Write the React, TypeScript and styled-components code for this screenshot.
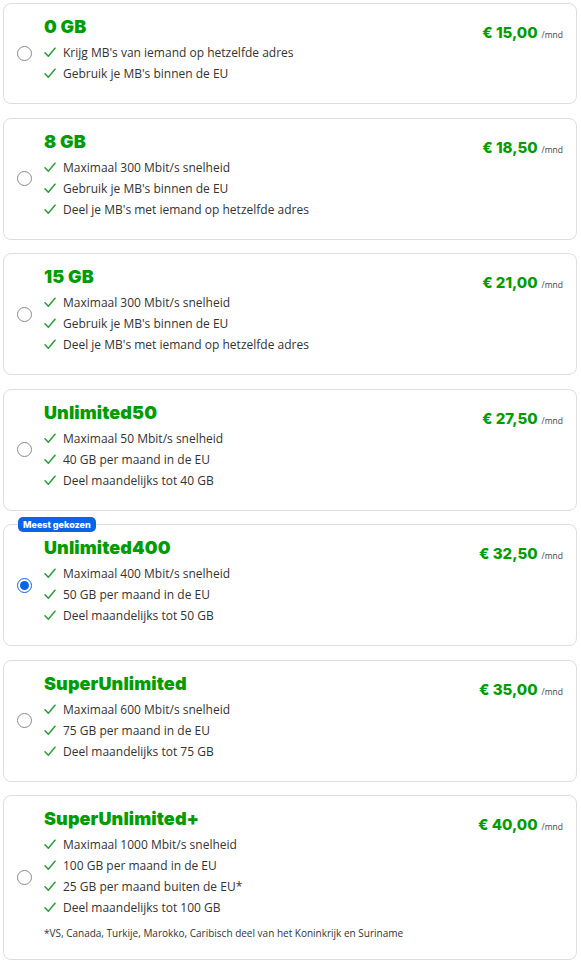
import { useState } from "react";
import styled, { createGlobalStyle } from "styled-components";

const GlobalStyle = createGlobalStyle`
  body {
    margin: 0;
    background: #ffffff;
    font-family: "Open Sans", "Noto Sans", sans-serif;
    color: #333;
  }
`;

interface IPlan {
  id: string;
  title: string;
  price: string;
  features: string[];
  badge?: string;
  note?: string;
}

const plans: IPlan[] = [
  {
    id: "0gb",
    title: "0 GB",
    price: "€ 15,00",
    features: ["Krijg MB's van iemand op hetzelfde adres", "Gebruik je MB's binnen de EU"],
  },
  {
    id: "8gb",
    title: "8 GB",
    price: "€ 18,50",
    features: [
      "Maximaal 300 Mbit/s snelheid",
      "Gebruik je MB's binnen de EU",
      "Deel je MB's met iemand op hetzelfde adres",
    ],
  },
  {
    id: "15gb",
    title: "15 GB",
    price: "€ 21,00",
    features: [
      "Maximaal 300 Mbit/s snelheid",
      "Gebruik je MB's binnen de EU",
      "Deel je MB's met iemand op hetzelfde adres",
    ],
  },
  {
    id: "u50",
    title: "Unlimited50",
    price: "€ 27,50",
    features: ["Maximaal 50 Mbit/s snelheid", "40 GB per maand in de EU", "Deel maandelijks tot 40 GB"],
  },
  {
    id: "u400",
    title: "Unlimited400",
    price: "€ 32,50",
    badge: "Meest gekozen",
    features: ["Maximaal 400 Mbit/s snelheid", "50 GB per maand in de EU", "Deel maandelijks tot 50 GB"],
  },
  {
    id: "su",
    title: "SuperUnlimited",
    price: "€ 35,00",
    features: ["Maximaal 600 Mbit/s snelheid", "75 GB per maand in de EU", "Deel maandelijks tot 75 GB"],
  },
  {
    id: "suplus",
    title: "SuperUnlimited+",
    price: "€ 40,00",
    features: [
      "Maximaal 1000 Mbit/s snelheid",
      "100 GB per maand in de EU",
      "25 GB per maand buiten de EU*",
      "Deel maandelijks tot 100 GB",
    ],
    note: "*VS, Canada, Turkije, Marokko, Caribisch deel van het Koninkrijk en Suriname",
  },
];

const Check = () => (
  <svg width="12" height="11" viewBox="0 0 12 11" fill="none">
    <path d="M1 5.8 L4.3 9.3 L11 1.2" stroke="#2a9d3a" strokeWidth="1.5" strokeLinecap="round" strokeLinejoin="round" />
  </svg>
);

const App = () => {
  const [selected, setSelected] = useState("u400");

  return (
    <>
      <GlobalStyle />
      <List>
        {plans.map((plan) => (
          <Card key={plan.id} onClick={() => setSelected(plan.id)}>
            {plan.badge && <Badge>{plan.badge}</Badge>}
            <RadioCol>
              <Radio checked={selected === plan.id} />
            </RadioCol>
            <Body>
              <Title>{plan.title}</Title>
              <Features>
                {plan.features.map((f) => (
                  <Feature key={f}>
                    <Check />
                    <span>{f}</span>
                  </Feature>
                ))}
              </Features>
              {plan.note && <Note>{plan.note}</Note>}
            </Body>
            <Price>
              <Amount>{plan.price}</Amount>
              <Per>/mnd</Per>
            </Price>
          </Card>
        ))}
      </List>
    </>
  );
};

const List = styled.div`
  display: flex;
  flex-direction: column;
  gap: 13.5px;
  padding: 3px 4px 3px 3px;
`;

const Card = styled.div`
  position: relative;
  display: flex;
  align-items: stretch;
  border: 1px solid #dedede;
  border-radius: 8px;
  background: #fff;
  padding: 11px 13px 19px 0;
  cursor: pointer;
`;

const Badge = styled.div`
  position: absolute;
  top: -8px;
  left: 14px;
  background: #0b63e5;
  color: #fff;
  font-family: "Inter", sans-serif;
  font-weight: 800;
  font-size: 9px;
  line-height: 15px;
  padding: 0 5px;
  border-radius: 5px;
`;

const RadioCol = styled.div`
  width: 40px;
  display: flex;
  align-items: center;
  justify-content: center;
  flex-shrink: 0;
  margin-bottom: -8px;
`;

interface IRadio {
  checked: boolean;
}

const Radio = styled.span<IRadio>`
  box-sizing: border-box;
  width: 15px;
  height: 15px;
  border-radius: 50%;
  border: ${(p) => (p.checked ? "1.5px solid #0b63e5" : "1px solid #8a8a8a")};
  display: flex;
  align-items: center;
  justify-content: center;
  &::after {
    content: "";
    width: 9px;
    height: 9px;
    border-radius: 50%;
    background: #0b63e5;
    display: ${(p) => (p.checked ? "block" : "none")};
  }
`;

const Body = styled.div`
  flex: 1;
  display: flex;
  flex-direction: column;
`;

const Title = styled.div`
  font-family: "Inter", sans-serif;
  font-weight: 900;
  font-size: 18px;
  line-height: 24px;
  color: #009c00;
  letter-spacing: 0.1px;
  margin-bottom: 3px;
`;

const Features = styled.div`
  display: flex;
  flex-direction: column;
`;

const Feature = styled.div`
  display: flex;
  align-items: center;
  gap: 7px;
  font-size: 12px;
  line-height: 21px;
  color: #333;
`;

const Note = styled.div`
  font-size: 10px;
  color: #333;
  margin-top: 8px;
  line-height: 14px;
`;

const Price = styled.div`
  display: flex;
  align-items: baseline;
  gap: 4px;
  padding-top: 8px;
  align-self: flex-start;
`;

const Amount = styled.span`
  font-family: "Inter", sans-serif;
  font-weight: 800;
  font-size: 15px;
  color: #009c00;
`;

const Per = styled.span`
  font-size: 8.5px;
  color: #444;
`;

export default App;
